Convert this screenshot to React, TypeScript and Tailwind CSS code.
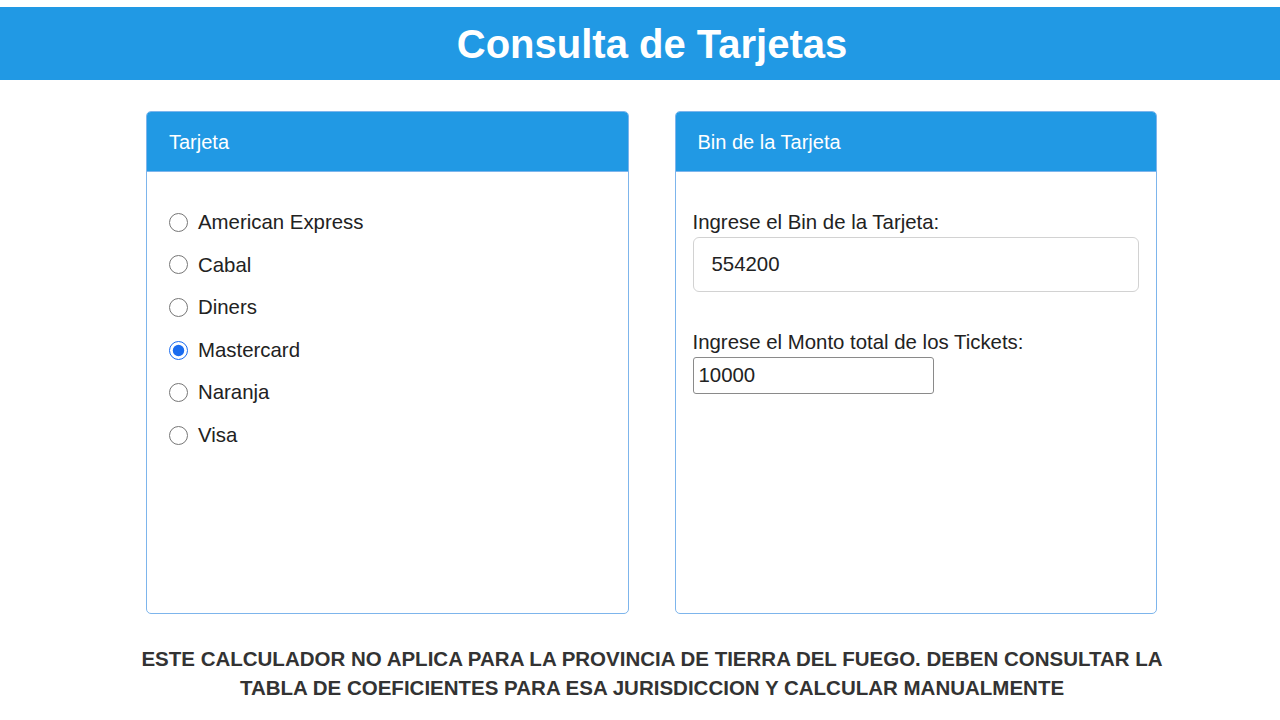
import React from "react";

const cards = ["American Express", "Cabal", "Diners", "Mastercard", "Naranja", "Visa"];

export default function App() {
  return (
    <div className="min-h-[720px] bg-white font-['Liberation_Sans',Arial,sans-serif] text-[#222]">
      <div className="h-[7px]" />
      <header className="h-[73px] bg-[#2199e4] flex items-center justify-center pl-[24px]">
        <h1 className="text-[40px] font-bold text-white leading-none">Consulta de Tarjetas</h1>
      </header>

      <div className="ml-[146px] w-[1011px] mt-[31px] flex gap-[46px]">
        <section className="flex-1 h-[503px] border-[1.5px] border-[#7db5ec] rounded-[5px] overflow-hidden flex flex-col">
          <div className="h-[60px] bg-[#2199e4] flex items-center px-[22px] border-b-[1.5px] border-[#7db5ec]">
            <span className="text-white text-[20px]">Tarjeta</span>
          </div>
          <div className="pt-[29px] pl-[22px] flex flex-col">
            {cards.map((c) => (
              <label key={c} className="h-[42.6px] flex items-center text-[20.4px] text-[#222]">
                <input
                  type="radio"
                  name="card"
                  defaultChecked={c === "Mastercard"}
                  className="w-[19px] h-[19px] m-0 mr-[10px] accent-[#1a6cf0]"
                />
                {c}
              </label>
            ))}
          </div>
        </section>

        <section className="flex-1 h-[503px] border-[1.5px] border-[#7db5ec] rounded-[5px] overflow-hidden flex flex-col">
          <div className="h-[60px] bg-[#2199e4] flex items-center px-[22px] border-b-[1.5px] border-[#7db5ec]">
            <span className="text-white text-[20px]">Bin de la Tarjeta</span>
          </div>
          <div className="pt-[38px] px-[17px] flex flex-col">
            <label className="text-[20.4px] leading-[24px] text-[#222]">Ingrese el Bin de la Tarjeta:</label>
            <input
              type="text"
              defaultValue="554200"
              className="mt-[3px] h-[55px] w-[446px] border-[1.5px] border-[#d2d2d2] rounded-[6px] px-[18px] text-[20.4px] text-[#222] outline-none"
            />
            <label className="mt-[38px] text-[20.4px] leading-[24px] text-[#222]">Ingrese el Monto total de los Tickets:</label>
            <input
              type="text"
              defaultValue="10000"
              className="mt-[3px] h-[37px] w-[241px] border-[1.5px] border-[#8a8a8a] rounded-[3px] px-[5px] text-[20.4px] text-[#222] outline-none"
            />
          </div>
        </section>
      </div>

      <p className="mt-[30px] pl-[24px] text-center text-[20.5px] font-bold leading-[29px] text-[#333] uppercase">
        Este calculador no aplica para la provincia de Tierra del Fuego. Deben consultar la
        <br />
        tabla de coeficientes para esa jurisdiccion y calcular manualmente
      </p>
    </div>
  );
}
